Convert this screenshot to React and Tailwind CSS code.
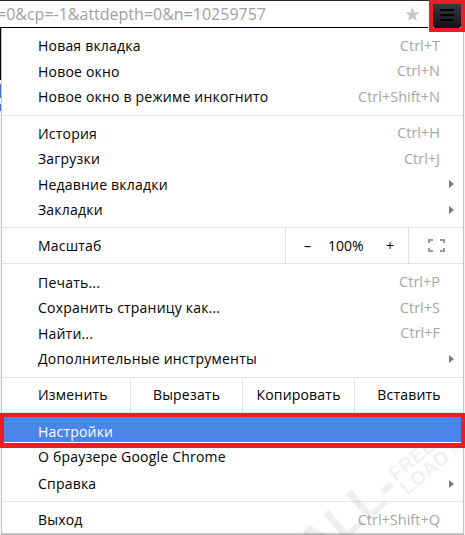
import React from "react";

const font = { fontFamily: '"Open Sans", "Noto Sans", sans-serif' };

function Row({ label, shortcut, arrow, className = "" }) {
  return (
    <div className={`flex h-[25.5px] items-center justify-between pl-[36px] ${arrow ? "pr-[9px]" : "pr-[23px]"} ${className}`}>
      <span className="tracking-[0.2px]">{label}</span>
      {shortcut && <span className="text-[14.5px] text-[#a6a6a6]">{shortcut}</span>}
      {arrow && (
        <svg width="5" height="8" viewBox="0 0 5 8">
          <path d="M0 0 L5 4 L0 8 Z" fill="#7a7a7a" />
        </svg>
      )}
    </div>
  );
}

function Sep({ h = 11 }) {
  return (
    <div className="flex flex-col justify-center" style={{ height: h }}>
      <div className="h-px bg-[#e6e6e6]" />
    </div>
  );
}

export default function App() {
  return (
    <div className="relative h-[535px] w-[465px] overflow-hidden bg-white text-[14px] text-black" style={font}>
      {/* toolbar */}
      <div className="flex h-[28px] border-t border-[#2a2a30]">
        <div className="flex flex-1 items-center overflow-hidden border-b border-black pr-[6px]">
          <span className="ml-[-3px] whitespace-nowrap text-[16px] text-[#a0a0a0]">=0&amp;cp=-1&amp;attdepth=0&amp;n=10259757</span>
          <div className="flex-1" />
          <svg width="15" height="14" viewBox="0 0 24 23" className="mr-[2px] shrink-0">
            <path d="M12 0 L15 8.5 L24 8.8 L16.9 14.3 L19.4 23 L12 17.9 L4.6 23 L7.1 14.3 L0 8.8 L9 8.5 Z" fill="#c8c8c8" />
          </svg>
        </div>
        <div className="flex w-[37px] items-start justify-start pl-[5px] pt-[1px]">
          <div className="flex h-[26px] w-[28px] flex-col items-center justify-center gap-[3px] rounded-[2px] bg-gradient-to-b from-[#3c3d4a] to-[#111118]">
            <div className="h-[2px] w-[14px] bg-black" />
            <div className="h-[2px] w-[14px] bg-black" />
            <div className="h-[2px] w-[14px] bg-black" />
          </div>
        </div>
      </div>

      {/* page behind the menu */}
      <div className="absolute left-0 top-[28px] h-[52px] w-px bg-black" />
      <div className="absolute left-0 top-[84px] h-[14px] w-px bg-[#4a74c8]" />
      <div className="absolute left-0 top-[104px] h-[7px] w-px bg-[#4a74c8]" />

      {/* menu */}
      <div className="ml-px mr-[1px] w-[463px] border-x border-b border-[#c4c4c4] bg-white pt-[5px] shadow-[0_1px_1px_rgba(0,0,0,0.25)]">
        <Row label="Новая вкладка" shortcut="Ctrl+T" />
        <Row label="Новое окно" shortcut="Ctrl+N" />
        <Row label="Новое окно в режиме инкогнито" shortcut="Ctrl+Shift+N" />
        <Sep h={11} />
        <Row label="История" shortcut="Ctrl+H" />
        <Row label="Загрузки" shortcut="Ctrl+J" />
        <Row label="Недавние вкладки" arrow />
        <Row label="Закладки" arrow />
        <div className="h-[4px]" />
        <div className="flex h-[37px] border-y border-[#e1e1e1]">
          <div className="flex flex-1 items-center pl-[36px] tracking-[0.2px]">Масштаб</div>
          <div className="flex w-[123px] items-center border-l border-[#e1e1e1] pl-[18px]">
            <span className="w-[24px]">–</span>
            <span className="w-[58px]">100%</span>
            <span>+</span>
          </div>
          <div className="flex w-[55px] items-center justify-center border-l border-[#e1e1e1]">
            <svg width="17" height="13" viewBox="0 0 17 13" fill="none" stroke="#9a9a9a" strokeWidth="2">
              <path d="M1 4 V1 H5 M12 1 H16 V4 M16 9 V12 H12 M5 12 H1 V9" />
            </svg>
          </div>
        </div>
        <div className="h-[6px]" />
        <Row label="Печать..." shortcut="Ctrl+P" />
        <Row label="Сохранить страницу как..." shortcut="Ctrl+S" />
        <Row label="Найти..." shortcut="Ctrl+F" />
        <Row label="Дополнительные инструменты" arrow />
        <div className="h-[5px]" />
        <div className="flex h-[36px] border-y border-[#e1e1e1]">
          <div className="flex w-[128px] items-center pl-[36px] tracking-[0.2px]">Изменить</div>
          <div className="flex w-[112px] items-center justify-center border-l border-[#e1e1e1] tracking-[0.2px]">Вырезать</div>
          <div className="flex w-[112px] items-center justify-center border-l border-[#e1e1e1] tracking-[0.2px]">Копировать</div>
          <div className="flex flex-1 items-center justify-center border-l border-[#e1e1e1] tracking-[0.2px]">Вставить</div>
        </div>
        <div className="h-[4px]" />
        <Row label="Настройки" className="!h-[25px] bg-[#4a86e8] pt-[5px] text-white" />
        <div className="h-[2.5px]" />
        <Row label="О браузере Google Chrome" />
        <Row label="Справка" arrow className="!h-[26.5px] pt-[2px]" />
        <Sep h={11} />
        <Row label="Выход" shortcut="Ctrl+Shift+Q" />
      </div>

      {/* watermark */}
      <div className="pointer-events-none absolute left-[282px] top-[462px] flex w-[200px] -rotate-[40deg] items-end justify-center gap-[2px] font-black text-[rgba(110,110,110,0.11)]" style={{ fontFamily: '"Liberation Sans", sans-serif' }}>
        <span className="text-[50px] leading-none">ALL-</span>
        <span className="flex flex-col text-[20px] leading-[18px]">
          <span>FREE</span>
          <span>LOAD</span>
        </span>
        <span className="text-[13px] leading-none">.NET</span>
      </div>

      {/* red annotation boxes */}
      <div className="pointer-events-none absolute right-0 top-0 h-[32px] w-[36px] border-[4px] border-[#ec1c24]" />
      <div className="pointer-events-none absolute left-0 top-[413px] h-[35px] w-[465px] border-[4px] border-b-[5px] border-[#ec1c24]" />
    </div>
  );
}
